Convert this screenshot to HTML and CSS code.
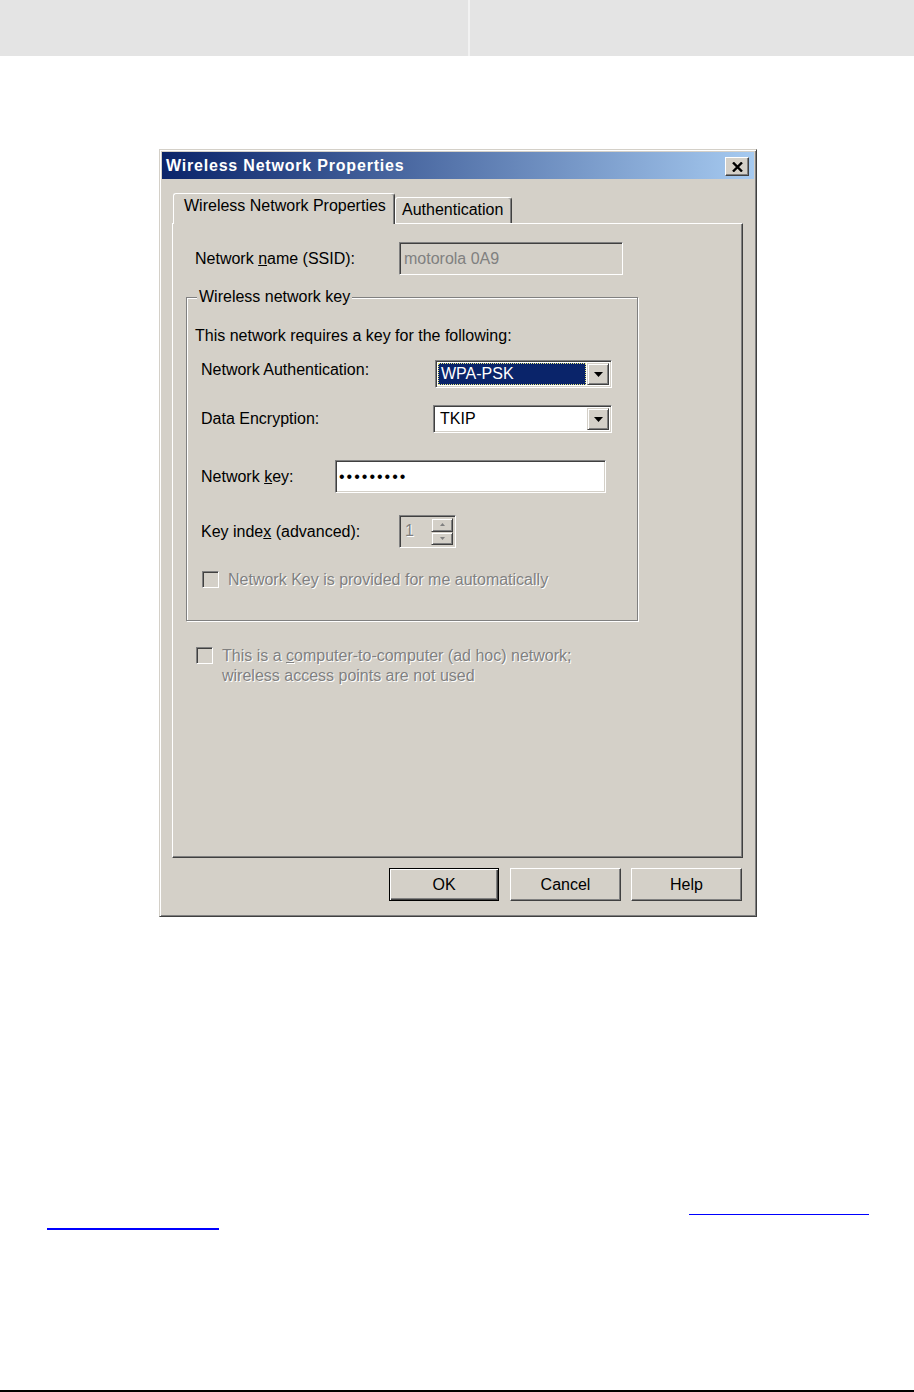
FILE: index.html
```html
<!DOCTYPE html>
<html lang="en">
<head>
    <meta charset="UTF-8">
    <meta name="viewport" content="width=device-width, initial-scale=1.0">
    <title>Wireless Network Properties</title>
    <link rel="stylesheet" href="styles.css">
</head>
<body>
    <header class="doc-head">
        <div class="doc-head-cell"></div>
        <div class="doc-head-cell doc-head-cell--right"></div>
    </header>

    <main class="doc">
        <div class="dialog">
            <div class="titlebar">
                <span class="title">Wireless Network Properties</span>
                <span class="close-btn">
                    <svg width="11" height="10" viewBox="0 0 11 10"><path d="M1 0.5 L10 9.5 M10 0.5 L1 9.5" stroke="#000" stroke-width="2.4"/></svg>
                </span>
            </div>

            <div class="dialog-body">
                <div class="tabs">
                    <div class="tab tab--active">Wireless Network Properties</div>
                    <div class="tab">Authentication</div>
                </div>

                <div class="tab-panel">
                    <div class="row row--name">
                        <span class="label label--name">Network <u>n</u>ame (SSID):</span>
                        <div class="field field--disabled field--ssid">motorola 0A9</div>
                    </div>

                    <fieldset class="group">
                        <legend>Wireless network key</legend>
                        <p class="group-intro">This network requires a key for the following:</p>

                        <div class="row row--auth">
                            <span class="label label--auth">Network Authentication:</span>
                            <div class="combo combo--auth">
                                <span class="combo-value combo-value--selected">WPA-PSK</span>
                                <span class="combo-arrow"><svg width="9" height="5" viewBox="0 0 9 5"><polygon points="0,0 9,0 4.5,5" fill="#000"/></svg></span>
                            </div>
                        </div>

                        <div class="row row--enc">
                            <span class="label label--enc">Data Encryption:</span>
                            <div class="combo combo--enc">
                                <span class="combo-value">TKIP</span>
                                <span class="combo-arrow"><svg width="9" height="5" viewBox="0 0 9 5"><polygon points="0,0 9,0 4.5,5" fill="#000"/></svg></span>
                            </div>
                        </div>

                        <div class="row row--key">
                            <span class="label label--key">Network <u>k</u>ey:</span>
                            <div class="field field--key">&bull;&bull;&bull;&bull;&bull;&bull;&bull;&bull;&bull;</div>
                        </div>

                        <div class="row row--index">
                            <span class="label label--index">Key inde<u>x</u> (advanced):</span>
                            <div class="spin">
                                <span class="spin-value">1</span>
                                <span class="spin-buttons">
                                    <span class="spin-btn"><svg width="5" height="3" viewBox="0 0 5 3"><polygon points="2.5,0 5,3 0,3" fill="#808080"/></svg></span>
                                    <span class="spin-btn"><svg width="5" height="3" viewBox="0 0 5 3"><polygon points="0,0 5,0 2.5,3" fill="#808080"/></svg></span>
                                </span>
                            </div>
                        </div>

                        <div class="check-row check-row--auto">
                            <span class="checkbox"></span>
                            <span class="disabled-text">Network Key is provided for me automatically</span>
                        </div>
                    </fieldset>

                    <div class="check-row check-row--adhoc">
                        <span class="checkbox"></span>
                        <span class="disabled-text">This is a <u>c</u>omputer-to-computer (ad hoc) network;<br>wireless access points are not used</span>
                    </div>
                </div>

                <div class="buttons">
                    <button class="btn btn--default">OK</button>
                    <button class="btn">Cancel</button>
                    <button class="btn">Help</button>
                </div>
            </div>
        </div>

        <div class="links">
            <span class="link-line link-line--first"></span>
            <span class="link-line link-line--second"></span>
        </div>
    </main>

    <footer class="doc-foot"></footer>
</body>
</html>
```

FILE: styles.css
```css
* {
    box-sizing: border-box;
}

body {
    margin: 0;
    background: #fff;
    font-family: "Liberation Sans", Arial, sans-serif;
    font-size: 16px;
    color: #000;
}

/* document header */
.doc-head {
    display: flex;
    height: 56px;
    background: #e4e4e4;
}

.doc-head-cell {
    width: 468px;
}

.doc-head-cell--right {
    flex: 1;
    border-left: 2px solid #f2f2f2;
}

/* dialog window */
.dialog {
    width: 598px;
    height: 768px;
    margin: 93px 0 0 159px;
    padding: 2px;
    background: #d4d0c8;
    border: 1px solid;
    border-color: #d4d0c8 #404040 #404040 #d4d0c8;
    box-shadow: inset 1px 1px #fff, inset -1px -1px #808080;
}

.titlebar {
    display: flex;
    align-items: center;
    justify-content: space-between;
    height: 27px;
    padding: 0 5px 0 4px;
    background: linear-gradient(to right, #0a246a, #a6caf0);
}

.title {
    color: #fff;
    font-weight: bold;
    font-size: 16px;
    letter-spacing: 0.8px;
}

.close-btn {
    display: flex;
    align-items: center;
    justify-content: center;
    width: 24px;
    height: 19px;
    margin-top: 2px;
    background: #d4d0c8;
    border: 1px solid;
    border-color: #fff #404040 #404040 #fff;
    box-shadow: inset -1px -1px #808080;
}

.dialog-body {
    padding: 0 11px 0 10px;
}

/* tabs */
.tabs {
    display: flex;
    align-items: flex-end;
    margin-top: 14px;
    padding-left: 1px;
}

.tab {
    height: 26px;
    padding: 3px 0 0 6px;
    width: 117px;
    border: 1px solid;
    border-bottom: none;
    border-color: #fff #404040 #404040 #fff;
    border-radius: 3px 3px 0 0;
    box-shadow: inset -1px 0 #808080;
    background: #d4d0c8;
}

.tab--active {
    position: relative;
    z-index: 1;
    width: 222px;
    height: 31px;
    margin-bottom: -1px;
    padding: 3px 0 0 10px;
}

.tab-panel {
    height: 635px;
    padding: 18px 0 0 13px;
    border: 1px solid;
    border-color: #fff #404040 #404040 #fff;
    box-shadow: inset -1px -1px #808080;
}

/* rows */
.row {
    display: flex;
    align-items: center;
}

.label {
    flex: none;
}

.row--name {
    padding-left: 9px;
}

.label--name { width: 204px; }
.label--auth { width: 234px; margin-top: -8px; }
.label--enc { width: 232px; }
.label--key { width: 134px; }
.label--index { width: 198px; }

.row--auth,
.row--enc,
.row--key,
.row--index {
    padding-left: 6px;
}

.row--auth { margin-top: 15px; }
.row--enc { margin-top: 17px; }
.row--key { margin-top: 27px; }
.row--index { margin-top: 22px; }

/* sunken fields */
.field,
.combo,
.spin {
    height: 33px;
    border: 1px solid;
    border-color: #808080 #fff #fff #808080;
    box-shadow: inset 1px 1px #404040, inset -1px -1px #d4d0c8;
    background: #fff;
}

.field {
    display: flex;
    align-items: center;
    padding-left: 4px;
}

.field--disabled {
    background: #d4d0c8;
    color: #808080;
}

.field--ssid { width: 224px; }

.field--key {
    width: 271px;
    letter-spacing: 2px;
    padding-left: 3px;
}

.combo {
    display: flex;
    height: 28px;
    padding: 2px;
}

.combo--auth { width: 177px; }
.combo--enc { width: 179px; }

.combo-value {
    flex: 1;
    display: flex;
    align-items: center;
    padding-left: 4px;
}

.combo-value--selected {
    margin-right: 1px;
    padding-left: 2px;
    background: #0a246a;
    color: #fff;
    border: 1px dotted #e8e880;
}

.combo-arrow {
    display: flex;
    align-items: center;
    justify-content: center;
    width: 22px;
    background: #d4d0c8;
    border: 1px solid;
    border-color: #d4d0c8 #404040 #404040 #d4d0c8;
    box-shadow: inset 1px 1px #fff, inset -1px -1px #808080;
}

.spin {
    display: flex;
    width: 57px;
    padding: 2px;
    background: #d4d0c8;
}

.spin-value {
    flex: 1;
    padding: 4px 0 0 3px;
    color: #808080;
    text-shadow: 1px 1px 0 #fff;
}

.spin-buttons {
    display: flex;
    flex-direction: column;
    width: 22px;
}

.spin-btn {
    flex: 1;
    display: flex;
    align-items: center;
    justify-content: center;
    border: 1px solid;
    border-color: #d4d0c8 #404040 #404040 #d4d0c8;
    box-shadow: inset 1px 1px #fff, inset -1px -1px #808080;
}

/* group box */
.group {
    width: 452px;
    margin: 13px 0 0;
    padding: 0 0 30px 8px;
    border: 1px solid #808080;
    box-shadow: inset 1px 1px #fff, 1px 1px #fff;
}

.group legend {
    margin-left: 2px;
    padding: 0 2px;
    line-height: 18px;
    background: #d4d0c8;
}

.group-intro {
    margin: 20px 0 0;
    line-height: 19px;
}

/* check boxes */
.check-row {
    display: flex;
    align-items: flex-start;
    gap: 9px;
    line-height: 20px;
}

.check-row--auto {
    margin-top: 22px;
    padding-left: 7px;
}

.check-row--adhoc {
    margin-top: 25px;
    padding-left: 10px;
}

.checkbox {
    flex: none;
    width: 17px;
    height: 17px;
    margin-top: 1px;
    border: 1px solid;
    border-color: #808080 #fff #fff #808080;
    box-shadow: inset 1px 1px #404040, inset -1px -1px #d4d0c8;
    background: #d4d0c8;
}

.disabled-text {
    color: #808080;
    text-shadow: 1px 1px 0 #fff;
}

/* buttons */
.buttons {
    display: flex;
    justify-content: flex-end;
    gap: 10px;
    margin-top: 10px;
    padding-right: 1px;
}

.btn {
    width: 111px;
    height: 33px;
    padding: 0;
    font: inherit;
    color: #000;
    background: #d4d0c8;
    border: 1px solid;
    border-color: #fff #404040 #404040 #fff;
    box-shadow: inset -1px -1px #808080;
}

.btn--default {
    width: 110px;
    margin-right: 1px;
    border-color: #000;
    box-shadow: inset 1px 1px #fff, inset -1px -1px #404040, inset -2px -2px #808080;
}

/* page links below the picture */
.links {
    margin-top: 297px;
}

.link-line {
    display: block;
    border-top: 1px solid #0000ff;
}

.link-line--first {
    width: 180px;
    margin-left: 689px;
}

.link-line--second {
    width: 172px;
    margin: 13px 0 0 47px;
    border-top-width: 2px;
}

.doc-foot {
    margin-top: 160px;
    border-top: 2px solid #000;
}
```
